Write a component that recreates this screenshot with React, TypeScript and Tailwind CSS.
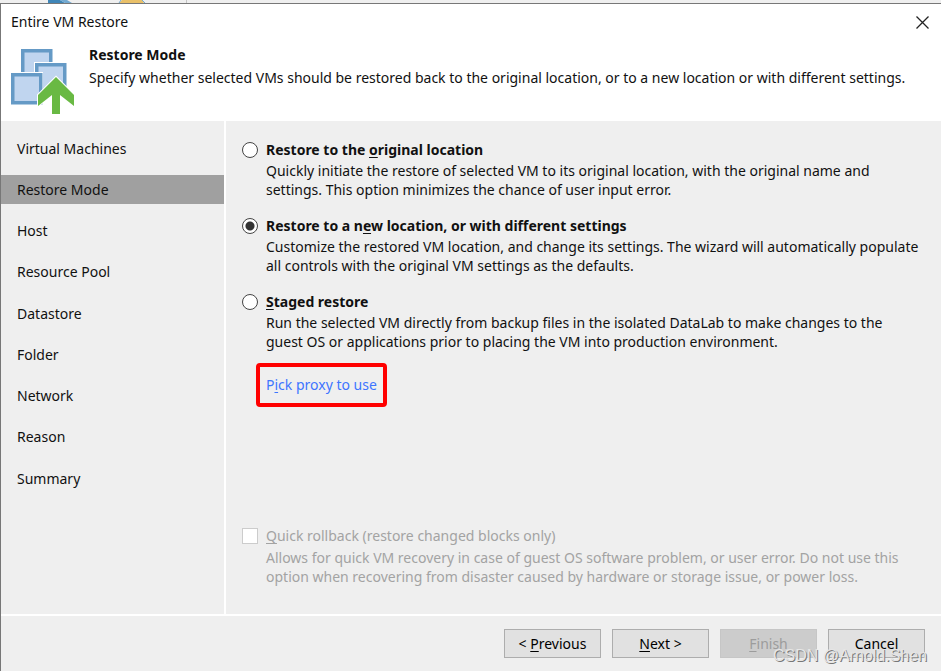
import { useState } from "react";
import type { ReactNode } from "react";

const STEPS = [
	"Virtual Machines",
	"Restore Mode",
	"Host",
	"Resource Pool",
	"Datastore",
	"Folder",
	"Network",
	"Reason",
	"Summary",
];

type Mode = {
	id: string;
	title: ReactNode;
	lines: [string, string];
};

const MODES: Mode[] = [
	{
		id: "original",
		title: (
			<>
				Restore to the <Key>o</Key>riginal location
			</>
		),
		lines: [
			"Quickly initiate the restore of selected VM to its original location, with the original name and",
			"settings. This option minimizes the chance of user input error.",
		],
	},
	{
		id: "new",
		title: (
			<>
				Restore to a n<Key>e</Key>w location, or with different settings
			</>
		),
		lines: [
			"Customize the restored VM location, and change its settings. The wizard will automatically populate",
			"all controls with the original VM settings as the defaults.",
		],
	},
	{
		id: "staged",
		title: (
			<>
				<Key>S</Key>taged restore
			</>
		),
		lines: [
			"Run the selected VM directly from backup files in the isolated DataLab to make changes to the",
			"guest OS or applications prior to placing the VM into production environment.",
		],
	},
];

// Underlined accelerator letter
function Key({ children }: { children: ReactNode }) {
	return <span className="underline underline-offset-2">{children}</span>;
}

function RestoreIcon() {
	return (
		<svg viewBox="0 0 64 67" className="h-[67px] w-16 shrink-0" aria-hidden="true">
			<g fill="#c0d5ef" stroke="#659ac6" strokeWidth="3.5">
				<rect x="11.75" y="2.75" width="28" height="28" />
				<path d="M23 14h33v33H23z" fill="#fff" stroke="none" />
				<rect x="25.75" y="16.75" width="28" height="28" />
				<path d="M-1 24h33v33H-1z" fill="#fff" stroke="none" />
				<rect x="1.75" y="26.75" width="28" height="28" />
			</g>
			<path
				d="M45 29 27 47v11l14-11v19h8V47l14 11V47z"
				fill="#69b943"
				stroke="#fff"
				strokeWidth="2"
				paintOrder="stroke"
			/>
		</svg>
	);
}

function WindowBehind() {
	return (
		<div className="h-[3px] overflow-hidden bg-[#efefef]">
			<svg width="200" height="3" aria-hidden="true">
				<path d="M48 0h12l5 3H48z" fill="#3f86b8" />
				<path d="M60 0h7l5 3h-7z" fill="#72a9d0" />
				<path d="M122 0h20l2 3h-25z" fill="#e9c069" />
				<path d="M121 0l-2 3M142 0l3 3" stroke="#72a9d0" />
				<path d="M186.500 0v3" stroke="#c4c4c4" />
			</svg>
		</div>
	);
}

type WizardButtonProps = {
	children: ReactNode;
	disabled?: boolean;
};

function WizardButton({ children, disabled }: WizardButtonProps) {
	return (
		<button
			type="button"
			disabled={disabled}
			className="h-[29px] w-[97px] border border-[#adadad] bg-[#e1e1e1] text-black disabled:border-[#c6c6c6] disabled:bg-[#cccccc] disabled:text-[#9c9c9c]"
		>
			{children}
		</button>
	);
}

export default function App() {
	const [mode, setMode] = useState("new");

	return (
		<div className="relative flex min-h-screen flex-col bg-[#efefef] font-['Noto_Sans','Open_Sans',sans-serif] text-sm text-[#111111]">
			<WindowBehind />
			<div className="flex flex-1 flex-col border-t border-l border-[#777777]">
				<header className="bg-white pb-[6px]">
					<div className="flex h-9 items-center justify-between pr-3 pl-[10px]">
						<span>Entire VM Restore</span>
						<button type="button" aria-label="Close" className="text-[#222222]">
							<svg width="13" height="13" viewBox="0 0 13 13" aria-hidden="true">
								<path d="M.5.5l12 12M12.500.5l-12 12" stroke="currentColor" strokeWidth="1.300" />
							</svg>
						</button>
					</div>
					<div className="flex gap-[14px] pt-2 pl-[10px]">
						<RestoreIcon />
						<div>
							<h1 className="leading-[14px] font-bold">Restore Mode</h1>
							<p className="mt-[6px]">
								Specify whether selected VMs should be restored back to the original location, or to a new
								location or with different settings.
							</p>
						</div>
					</div>
				</header>

				<div className="flex flex-1">
					<nav className="w-[225px] shrink-0 border-r-2 border-white pt-[13px]">
						<ul className="flex h-[359px] flex-col justify-between">
							{STEPS.map((step) => (
								<li key={step}>
									<a
										href="#"
										aria-current={step === "Restore Mode" ? "step" : undefined}
										className="flex h-[29px] items-center pl-4 aria-[current=step]:bg-[#a0a0a0]"
									>
										{step}
									</a>
								</li>
							))}
						</ul>
					</nav>

					<main className="flex flex-1 flex-col pt-[18px] pr-3 pb-7 pl-4">
						<div className="flex flex-col gap-4">
							{MODES.map((item) => (
								<div key={item.id} className="grid grid-cols-[16px_1fr] items-center gap-x-2">
									<input
										type="radio"
										id={item.id}
										name="mode"
										checked={mode === item.id}
										onChange={() => setMode(item.id)}
										className="size-4 appearance-none rounded-full border border-[#444444] bg-white p-[3px] checked:bg-[radial-gradient(circle,#333333_4px,#ffffff_5px)]"
									/>
									<label htmlFor={item.id} className="leading-[22px] font-bold">
										{item.title}
									</label>
									<p className="col-start-2 leading-[19px]">
										{item.lines[0]}
										<br />
										{item.lines[1]}
									</p>
								</div>
							))}
						</div>
						<a
							href="#"
							className="mt-3 ml-[14px] self-start rounded-sm border-4 border-[#ff0000] px-[6px] py-2 text-[#3e75ff]"
						>
							P<Key>i</Key>ck proxy to use
						</a>

						<div className="mt-auto grid grid-cols-[16px_1fr] items-center gap-x-2 text-[#a3a3a3]">
							<input
								type="checkbox"
								id="rollback"
								disabled
								className="size-4 appearance-none border border-[#cccccc] bg-white"
							/>
							<label htmlFor="rollback" className="leading-6">
								<Key>Q</Key>uick rollback (restore changed blocks only)
							</label>
							<p className="col-start-2 leading-[19px]">
								Allows for quick VM recovery in case of guest OS software problem, or user error. Do not use this
								<br />
								option when recovering from disaster caused by hardware or storage issue, or power loss.
							</p>
						</div>
					</main>
				</div>

				<footer className="flex justify-end gap-[11px] border-t-2 border-white pt-[13px] pr-4 pb-[13px]">
					<WizardButton>
						&lt; <Key>P</Key>revious
					</WizardButton>
					<WizardButton>
						<Key>N</Key>ext &gt;
					</WizardButton>
					<WizardButton disabled>
						<Key>F</Key>inish
					</WizardButton>
					<WizardButton>Cancel</WizardButton>
				</footer>
			</div>
			<span className="pointer-events-none absolute right-[14px] bottom-[5px] font-['Liberation_Sans',sans-serif] text-base leading-5 text-[#e6e6e6] [text-shadow:1px_1px_0_#777777]">
				CSDN @Arnold.Shen
			</span>
		</div>
	);
}
